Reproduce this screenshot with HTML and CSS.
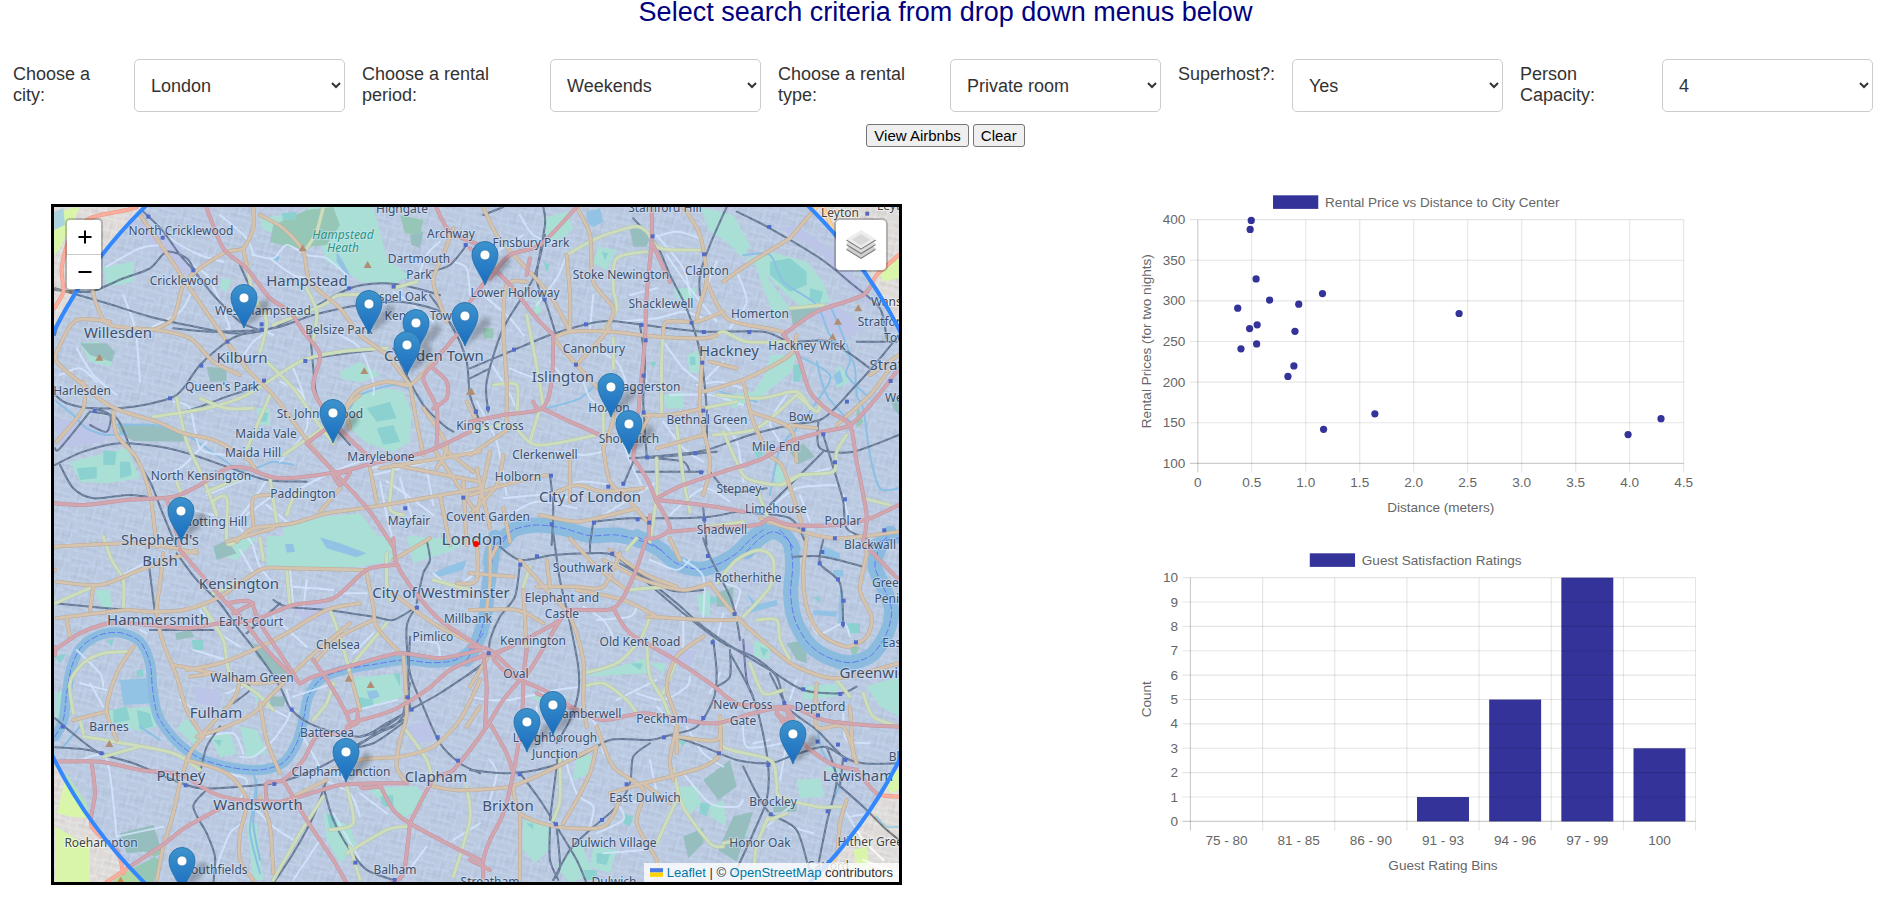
FILE: index.html
```html
<!DOCTYPE html>
<html lang="en">
<head>
<meta charset="utf-8">
<title>Airbnb search</title>
<link rel="stylesheet" href="styles.css">
</head>
<body>
<h2 class="page-title">Select search criteria from drop down menus below</h2>
<form class="search">
  <div class="fields">
    <div class="field"><label for="city">Choose a city:</label><select id="city"><option>London</option></select></div>
    <div class="field"><label for="period">Choose a rental period:</label><select id="period"><option>Weekends</option></select></div>
    <div class="field"><label for="type">Choose a rental type:</label><select id="type"><option>Private room</option></select></div>
    <div class="field"><label for="superhost">Superhost?:</label><select id="superhost"><option>Yes</option></select></div>
    <div class="field"><label for="capacity">Person Capacity:</label><select id="capacity"><option>4</option></select></div>
  </div>
  <div class="actions">
    <button type="button">View Airbnbs</button>
    <button type="button">Clear</button>
  </div>
</form>
<main class="results">
  <section class="map" aria-label="Map of London">
    <svg class="map-canvas" id="map" viewBox="0 0 845 675" preserveAspectRatio="xMidYMid slice"></svg>
    <div class="zoom">
      <button type="button" aria-label="Zoom in"><svg viewBox="0 0 16 16"><path d="M8 1.500v13M1.500 8h13"/></svg></button>
      <button type="button" aria-label="Zoom out"><svg viewBox="0 0 16 16"><path d="M1.500 8h13"/></svg></button>
    </div>
    <button type="button" class="layers" aria-label="Layers">
      <svg viewBox="0 0 26 26">
        <path fill="#747474" d="M.032 17.056l13-8 13 8-13 8z"/>
        <path fill="#d0d0d0" d="M.032 16.056l13-8 13 8-13 8z"/>
        <path fill="#747474" d="M.032 13l13-8 13 8-13 8z"/>
        <path fill="#dadada" d="M.032 12l13-8 13 8-13 8z"/>
        <path fill="#747474" d="M.032 9l13-8 13 8-13 8z"/>
        <path fill="#ededed" d="M.032 8l13-8 13 8-13 8z"/>
        <path fill="#d8d8d8" d="M5 8.500l8-5 8 5-8 5z"/>
      </svg>
    </button>
    <div class="attribution">
      <svg viewBox="0 0 12 8"><path fill="#4c7be1" d="M0 0h12v4H0z"/><path fill="#ffd500" d="M0 4h12v4H0z"/></svg>
      <a href="#leaflet">Leaflet</a> | © <a href="#osm">OpenStreetMap</a> contributors
    </div>
  </section>
  <section class="charts">
    <svg class="chart" id="scatter" viewBox="0 0 496 298" role="img" aria-label="Rental Price vs Distance to City Center"></svg>
    <svg class="chart" id="bars" viewBox="0 0 496 298" role="img" aria-label="Guest Satisfaction Ratings"></svg>
  </section>
</main>
<script src="app.js"></script>
</body>
</html>
```
FILE: styles.css
```css
* { box-sizing: border-box; }
html { overflow: hidden; }
body {
  margin: 0;
  background: #fff;
  color: #333;
  font-family: Arial, "Liberation Sans", sans-serif;
  font-size: 18px;
  line-height: 21px;
}
.page-title {
  margin: 0;
  padding-bottom: 34px;
  color: navy;
  font-size: 27px;
  font-weight: 400;
  line-height: 25px;
  text-align: center;
}
.fields {
  display: grid;
  grid-template-columns: 332fr 399fr 383fr 325fr 353fr;
  gap: 17px;
  padding: 0 18px 0 13px;
}
.field { display: flex; align-items: flex-start; }
.field label { flex: 1; padding: 5px 12px 0 0; }
.field select {
  width: 211px;
  height: 53px;
  padding: 12px;
  border: 1px solid #ccc;
  border-radius: 5px;
  background: #fff;
  color: #333;
  font: inherit;
}
.actions {
  display: flex;
  justify-content: center;
  gap: 4px;
  padding-top: 12px;
}
.actions button {
  height: 23px;
  padding: 0 7px;
  border: 1px solid #767676;
  border-radius: 3px;
  background: #efefef;
  color: #000;
  font-family: inherit;
  font-size: 15px;
  line-height: 18px;
}
.results {
  display: flex;
  align-items: flex-start;
  padding: 37px 0 0 51px;
}
.map {
  position: relative;
  flex: none;
  width: 45vw;
  margin-top: 20px;
  border: 3px solid #000;
  overflow: hidden;
  background: #e0dfdf;
}
.map-canvas { display: block; width: 100%; }
.zoom {
  position: absolute;
  top: 11px;
  left: 11px;
  border: 2px solid rgba(0, 0, 0, 0.2);
  border-radius: 5px;
  background-clip: padding-box;
}
.zoom button {
  display: flex;
  align-items: center;
  justify-content: center;
  width: 34px;
  height: 34px;
  padding: 0;
  border: 0;
  background: #fff;
  border-radius: 0 0 3px 3px;
}
.zoom button:first-child {
  height: 35px;
  border-bottom: 1px solid #ccc;
  border-radius: 3px 3px 0 0;
}
.zoom svg { width: 16px; height: 16px; margin-left: 2px; stroke: #000; stroke-width: 2; fill: none; }
.layers {
  position: absolute;
  top: 11px;
  right: 11px;
  display: flex;
  align-items: center;
  justify-content: center;
  width: 54px;
  height: 54px;
  padding: 0;
  border: 2px solid rgba(0, 0, 0, 0.2);
  border-radius: 6px;
  background: #fff;
  background-clip: padding-box;
}
.layers svg { width: 30px; height: 30px; }
.attribution {
  position: absolute;
  right: 0;
  bottom: 0;
  padding: 0 6px;
  background: rgba(255, 255, 255, 0.8);
  color: #333;
  font-size: 13px;
  line-height: 19px;
  white-space: nowrap;
}
.attribution svg { width: 13px; height: 9px; }
.attribution a { color: #0078a8; text-decoration: none; }
.charts {
  flex: 1;
  display: flex;
  flex-direction: column;
  align-items: center;
  gap: 21px;
  margin-left: 38px;
}
.chart {
  width: 59%;
  fill: #666;
  font-family: Arial, "Liberation Sans", sans-serif;
  font-size: 12px;
}
.chart line { stroke: rgba(0, 0, 0, 0.1); }
.chart .axis { stroke: rgba(0, 0, 0, 0.2); }
.chart .mark { fill: rgba(0, 0, 128, 0.8); }
.end { text-anchor: end; }
.middle { text-anchor: middle; }

.area-park { fill: #c8f6cc; }
.area-wood { fill: #b0d8a4; }
.area-pitch { fill: #a2e4c4; }
.area-grass { fill: #d8f5aa; }
.area-water { fill: #aad3df; }
.area-works { fill: #dfd4e2; }
.area-slate { fill: #b0ccb0; }
.line { fill: none; stroke-linejoin: round; stroke-linecap: round; }
.river { stroke: #a2cad8; }
.ferry { stroke: #6a73ee; stroke-width: 1; stroke-dasharray: 6 3; }
.canal { stroke: #a2cfdf; stroke-width: 2; }
.minor { stroke: #fff; stroke-width: 2; opacity: 0.8; }
.rail { stroke: #6e7075; stroke-width: 2; }
.rail-gap { stroke: #a8a9ad; stroke-width: 1; stroke-dasharray: 5 4; opacity: 0.6; }
.secondary { stroke: #f6f3ac; stroke-width: 3; }
.secondary-case { stroke: #d3d59a; stroke-width: 4; }
.primary { stroke: #fcd29c; stroke-width: 3; }
.primary-case { stroke: #e0b176; stroke-width: 4; }
.trunk { stroke: #fbae9c; stroke-width: 3; }
.trunk-case { stroke: #ea9486; stroke-width: 4; }
.station { fill: #5a66bb; }
.peak { fill: #d08f50; }
.place {
  font-family: "Noto Sans", sans-serif;
  fill: #444;
  stroke: rgba(255, 255, 255, 0.5);
  stroke-width: 2;
  paint-order: stroke;
  font-size: 12px;
}
.town { font-size: 15px; }
.capital { font-size: 17px; }
.nature { fill: #2a9a5a; font-style: italic; font-size: 12px; }
.range { fill: #38f; fill-opacity: 0.2; stroke: #38f; stroke-width: 4; }
.center { fill: #f00; }
```
FILE: app.js
```js
const NS = 'http://www.w3.org/2000/svg';

function add(parent, tag, attrs, text) {
  const el = document.createElementNS(NS, tag);
  for (const key in attrs) el.setAttribute(key, attrs[key]);
  if (text !== undefined) el.textContent = text;
  parent.appendChild(el);
  return el;
}

/* ---- charts ---- */
const TOP = 31.5, BOTTOM = 247;

function frame(svg, o) {
  const { left, right, rows, cols, title, titleX, xTitle, yTitle } = o;
  add(svg, 'rect', { class: 'mark', x: titleX, y: 10, width: 40, height: 12 });
  add(svg, 'text', { x: titleX + 46, y: 20 }, title);
  rows.forEach((label, i) => {
    const y = BOTTOM - (BOTTOM - TOP) * i / (rows.length - 1);
    add(svg, 'line', { x1: left - 7, x2: right, y1: y, y2: y, class: i ? '' : 'axis' });
    add(svg, 'text', { class: 'end', x: left - 11, y: y + 4 }, label);
  });
  for (let i = 0; i <= cols; i++) {
    const x = left + (right - left) * i / cols;
    add(svg, 'line', { x1: x, x2: x, y1: TOP, y2: BOTTOM + 8, class: i ? '' : 'axis' });
  }
  add(svg, 'text', { class: 'middle', x: (left + right) / 2, y: 290 }, xTitle);
  add(svg, 'text', { class: 'middle', transform: 'translate(14 139) rotate(-90)' }, yTitle);
}

const scatter = document.getElementById('scatter');
frame(scatter, {
  left: 55.5, right: 485, rows: [100, 150, 200, 250, 300, 350, 400], cols: 9,
  title: 'Rental Price vs Distance to City Center', titleX: 122,
  xTitle: 'Distance (meters)', yTitle: 'Rental Prices (for two nights)'
});
['0', '0.5', '1.0', '1.5', '2.0', '2.5', '3.0', '3.5', '4.0', '4.5'].forEach((t, i) =>
  add(scatter, 'text', { class: 'middle', x: 55.5 + 429.5 * i / 9, y: 268 }, t));
[[.495, 399], [.485, 388], [.54, 327], [.665, 301], [.37, 291], [.935, 296], [1.155, 309], [.55, 270.5],
 [.48, 266], [.9, 262.5], [.545, 247], [.4, 241], [.89, 220], [.835, 207], [2.42, 284.5], [1.64, 161],
 [1.165, 142], [3.985, 135.5], [4.29, 155]].forEach(([d, p]) =>
  add(scatter, 'circle', { class: 'mark', r: 3.2, cx: 55.5 + 429.5 * d / 4.5, cy: BOTTOM - (BOTTOM - TOP) * (p - 100) / 300 }));

const bars = document.getElementById('bars');
const step = (495.5 - 49) / 7;
[0, 0, 0, 1, 5, 10, 3].forEach((n, i) => {
  if (!n) return;
  const h = (BOTTOM - TOP) * n / 10;
  add(bars, 'rect', { class: 'mark', x: 49 + step * (i + .14), width: step * .72, y: BOTTOM - h, height: h });
});
frame(bars, {
  left: 49, right: 495.5, rows: [0, 1, 2, 3, 4, 5, 6, 7, 8, 9, 10], cols: 7,
  title: 'Guest Satisfaction Ratings', titleX: 154.5,
  xTitle: 'Guest Rating Bins', yTitle: 'Count'
});
['75 - 80', '81 - 85', '86 - 90', '91 - 93', '94 - 96', '97 - 99', '100'].forEach((t, i) =>
  add(bars, 'text', { class: 'middle', x: 49 + step * (i + .5), y: 268 }, t));

/* ---- map: four tiles, each with an origin, drawn at a third of its own units ---- */
const tiles = [
  { ox: -14, oy: -12,
    works: ['40 670 230 690 190 740 60 760', '250 60 420 150 460 230 440 240 300 120'],
    grass: ['42 60 90 40 120 36 60 160 42 180'],
    park: ['800 36 1000 36 1020 110 1040 190 1110 245 1060 265 960 260 920 230 860 200 830 110',
      '925 640 960 600 1040 580 1090 590 1115 650 1110 740 1060 770 980 745 930 700',
      '90 800 260 760 300 850 200 865 120 860', '730 1056 730 1000 850 965 960 955 1040 1056',
      '900 530 960 500 1020 540 960 562 905 552', '190 215 280 200 282 260 200 275', '120 445 170 440 225 470 212 515 150 500',
      '660 70 730 60 720 120 670 105', '545 250 575 255 560 290 540 280', '650 640 690 640 690 690 655 690'],
    wood: ['700 90 800 45 880 36 900 90 860 150 760 160 690 140', '1080 60 1150 75 1140 120 1095 115'],
    slate: ['230 685 400 695 445 720 430 740 280 738 240 715', '500 515 560 520 560 560 510 560', '120 445 200 445 225 470 215 500 150 480', '1110 120 1150 110 1140 160 1115 150'],
    pitch: ['190 765 230 770 225 810 190 810', '110 820 170 815 170 850 120 855', '980 640 1050 620 1070 670 1010 680', '1010 700 1060 690 1080 740 1030 750', '660 650 685 655 680 680 660 680', '240 800 270 800 275 840 240 850', '725 55 770 50 765 75 730 75'],
    water: ['42 50 70 40 75 90 42 105', '890 170 910 200 930 240 915 235 890 200', '700 180 720 185 712 200 700 195'],
    canal: ['50 620 100 660 140 700 200 720 260 715', '930 640 960 600 1060 570 1120 590 1150 620', '600 830 660 815 700 800 760 810', '230 690 340 690 430 715 500 760 600 830'],
    minor: ['200 215 300 160 370 150', '540 60 620 130 640 180', '640 180 700 190 740 150 800 180 860 190 920 240', '230 600 160 540 110 460', '250 300 280 380 290 430 300 560', '400 620 450 640 480 760 560 780', '330 860 420 820 500 740', '440 200 500 240 540 320 570 400', '700 400 640 440 600 500', '760 520 790 600 800 700 720 800', '900 420 960 460 1000 560 1000 600', '820 250 760 240 690 190', '560 400 600 420 640 400 700 420', '330 400 420 350 450 300', '720 560 780 590 800 640', '590 980 650 900 690 840', '780 880 860 840 960 800 1080 790', '1040 860 1100 900 1180 960', '1020 860 1040 960 1060 1040', '1080 850 1120 980', '1160 820 1180 930', '990 820 1260 780', '1180 380 1120 330 1060 290', '1200 140 1160 180 1130 260', '500 900 620 850', '640 1050 600 1000 560 960', '620 960 700 900', '1240 200 1280 220 1290 300', '680 930 740 980', '310 50 390 130 480 180 550 200', '60 540 120 520 170 560', '1000 840 1210 790 1320 760', '440 940 520 960'],
    rail: ['310 50 370 110 420 180 460 225 520 300 600 380 660 405', '45 285 150 290 250 250 330 220 380 170 440 190 465 230', '45 280 200 325 330 365 440 390 580 415 680 405 780 360 930 280 1030 265 1110 275 1200 300', '100 300 60 370 45 420', '400 400 520 410 700 400 820 360 960 330 1080 320 1200 350 1250 420', '660 405 600 420 560 440 480 510 430 580 390 610 280 635 160 640 80 625 45 600', '340 665 450 645 560 605 660 570 760 510 820 490 960 470 1040 462', '45 810 130 770 240 745 360 755 460 780 560 815 680 855 800 860', '150 650 60 760 45 760', '150 650 230 670 280 780 330 860 370 960 410 1056', '60 810 100 880 160 910 260 900 320 905', '810 410 820 520 830 600 880 690 930 750', '1060 460 1110 560 1150 630 1210 690 1240 710', '1170 300 1240 400 1280 500 1290 600 1320 680', '1280 150 1230 210 1170 230', '600 210 640 300', '160 640 210 660 200 710 150 690'],
    secondary: ['850 36 830 110 800 160', '620 200 640 300 680 380 660 470', '340 665 500 640 620 600 780 500 900 470 1040 460', '410 610 440 740 490 850 530 960', '680 500 760 580 830 680 880 745', '690 600 630 740 620 760', '730 780 850 700', '500 890 600 850', '530 960 520 920 560 910 560 1040 590 1040', '690 850 710 980', '440 940 410 860', '1060 820 1050 940 1090 960', '800 280 830 350 820 440', '1060 280 1130 260', '740 960 760 910 790 890', '480 610 560 640 640 640', '1040 300 900 300 850 330 700 390'],
    primary: ['640 40 640 100 610 160 560 170 480 220 430 270 400 370 340 405', '610 160 620 210', '150 250 170 330 210 390 350 405 450 430 520 500 600 540', '210 380 110 375 60 450 50 500 130 570 190 620 250 650 350 680 430 715 520 735 620 790 650 830', '660 60 730 100 790 170 810 260 900 340 960 420 1040 480 1110 570', '1240 100 1210 180 1180 260 1220 380', '300 60 370 160 450 280 540 410 620 520 700 600 760 680 820 760 890 840', '1110 570 1130 680 1150 780', '960 600 920 640 930 700', '910 650 950 590 1040 560 1110 570 1180 500', '1110 570 1040 560', '590 1040 640 1000 760 985 860 955 1000 935 1150 910 1320 880', '130 560 130 640 50 740', '220 650 230 720 290 790 330 900 350 1056', '990 820 1010 920', '1180 760 1260 880 1300 940', '1210 760 1300 830', '1020 820 1320 770', '840 950 900 880', '640 990 640 910 700 900', '560 1040 700 1000', '1280 620 1320 700', '1150 640 1220 750 1190 820', '1060 810 1320 860', '1200 900 1230 1050', '1270 860 1280 1050'],
    trunk: ['500 40 550 160 620 220 690 310 750 350 790 410 840 480 820 580 880 680 990 790', '45 925 140 930 260 915 400 905 480 870 560 820 620 820 720 850 900 830 1000 805 1160 770 1290 710', '800 745 860 700', '800 745 900 850 990 950 1060 1056', '1190 40 1230 110 1320 150', '1190 500 1150 550 1190 640 1190 750', '1250 420 1190 490', '380 910 420 1050', '880 840 930 830 900 870 880 840', '1180 520 1220 560 1220 610 1180 640', '42 340 70 290 65 220 90 130 150 70 260 45 290 36'],
    stations: '325 65 368 128 460 226 562 440 484 512 390 610 164 648 665 388 665 404 796 498 672 557 927 280 1061 275 1277 150 1308 650 1270 908 1096 940',
    peaks: '788 160 983 210 178 488 973 528 1294 590' },
  { ox: 416, oy: -12,
    works: ['930 100 1060 180 1130 270 1200 330 1190 300 1100 180 980 90', '1000 340 1100 330 1180 400 1120 440'],
    grass: ['1287 180 1230 240 1240 260 1287 250'],
    park: ['220 70 290 50 310 100 280 130 220 140', '385 155 440 165 410 225 370 205', '690 36 790 60 840 150 820 190 770 140 720 110',
      '830 190 900 170 1010 200 1060 260 1080 320 1000 340 950 300 890 240', '650 480 685 465 690 530 660 535',
      '900 480 980 480 965 530 880 600 790 640 750 600 850 590 890 530', '850 190 960 340 920 380 880 280', '610 280 680 280 670 320 620 310', '1090 540 1110 510 1140 560 1100 580', '580 600 640 590 640 640 590 640', '910 810 930 810 950 870 920 880', '200 300 215 350 190 360'],
    wood: ['1160 620 1180 680 1160 700', '40 400 70 400 70 430 40 430'],
    slate: ['480 105 510 90 540 125 530 155 490 155', '960 770 1000 745 1035 785 985 808', '960 340 1060 340 970 400', '1260 610 1287 600 1287 660 1270 640'],
    pitch: ['900 200 960 190 1010 230 1010 270 960 290 900 240', '1020 280 1060 290 1050 325 1020 315', '660 485 675 485 678 510 660 510', '970 510 1000 505 990 560 970 560', '220 200 240 210 230 230', '540 500 560 500 550 520', '1130 180 1160 190 1150 210', '395 170 415 175 405 195', '850 760 870 750 880 780 860 790'],
    water: ['350 50 390 40 400 80 370 95 350 80', '1090 540 1110 525 1120 560 1100 570'],
    river: [['100 1040 130 1005 200 990 280 1000 360 1022 440 1020 520 1040 580 1068', 15], ['830 1070 870 1030 910 1010 950 1030 970 1060', 15], ['60 1100 70 1060 110 1020', 15], ['1200 1056 1230 1040 1287 1030', 10]],
    canal: ['820 180 900 180 940 260 1040 330 1080 420 1150 500 1160 600 1180 640 1200 780 1230 880 1287 880', '980 480 1080 540 1040 620 980 700 930 760 900 900', '230 640 330 610 390 560 450 560', '1040 500 1070 600 1140 680', '750 590 860 620', '1080 330 1140 480 1130 540 1200 610'],
    minor: ['540 130 620 110 690 130', '590 180 660 280 740 380', '370 300 360 400', '440 380 560 370 640 350 700 370', '580 440 640 520 690 560', '120 520 200 550 330 560', '560 120 640 220 660 300', '800 230 830 320 780 400', '530 560 520 480', '600 600 720 600 820 630', '740 660 800 740 820 860', '40 300 120 370 160 420', '60 500 110 580 140 640', '240 900 330 860 420 870', '260 770 340 780 400 770', '400 960 500 900 560 860', '240 500 290 560', '340 450 440 500 480 600', '760 500 700 560', '950 600 900 680 930 740', '20 620 80 740 110 900', '580 680 640 760 700 800', '900 940 980 880 1100 870', '600 960 700 880 780 920', '990 900 1020 980', '740 200 700 300', '1120 900 1150 1040', '460 740 480 800 520 880', '480 300 560 280', '120 960 200 920 320 940', '100 910 210 900 330 910', '680 570 750 560 820 580', '150 60 190 120 270 150', '80 170 160 120', '1000 840 1080 820', '290 180 260 250 200 330', '560 340 620 330', '340 560 360 610 400 640'],
    rail: ['490 70 560 150 600 240 650 340 690 470 710 640 710 760', '0 520 120 470 240 420 340 390 420 378 560 395 700 410 880 410 960 440 1080 440 1200 520', '220 36 225 90 200 250 230 330 255 410', '225 120 190 250 100 400 50 560 55 650', '770 36 720 150 690 240 690 300', '800 50 900 100 1050 190 1150 270 1230 340 1250 430', '510 390 525 500 520 620 530 780', '480 790 600 780 710 765 840 720 960 690 1060 670 1150 580 1230 490 1287 420', '1045 680 1050 760 1150 770 1287 720', '1060 770 960 870 900 930', '500 830 640 830 700 830', '370 980 480 970 600 970 720 965 800 950', '490 800 460 870', '240 840 250 940 245 1050', '370 980 360 1050', '700 940 710 1050', '560 790 640 800 660 830', '1060 720 1100 850 1120 920 1130 1000 1190 1030', '40 60 100 36', '0 550 60 520', '530 790 740 770', '1160 440 1280 440', '720 830 780 890 890 880', '800 950 960 970 1010 1050'],
    secondary: ['290 180 380 130 490 95 530 110 570 160 690 165', '530 170 440 190 430 280 440 340 400 410', '580 400 575 500 575 660', '430 430 430 520', '170 360 190 460 210 570 220 640', '740 600 870 610 980 590 1020 640', '760 710 800 800 830 850 930 870 990 840', '620 690 640 850 660 950', '560 790 560 900 540 1040', '980 600 1040 650 1050 620', '0 710 120 690 200 750 380 720', '730 430 760 410 830 440 960 440', '960 340 1060 330', '1180 910 1260 930', '730 720 860 700 980 600', '700 640 800 620', '400 640 400 760', '70 570 140 570 140 660', '930 870 990 840 1090 830 1100 770 1130 720', '860 880 890 960', '680 1000 820 980', '210 640 180 740'],
    primary: ['40 36 80 120 150 200 240 300 300 410', '320 36 360 120 370 260 430 340 410 400', '640 36 690 120 710 250 690 330 680 370', '710 260 770 370 890 400 940 410', '250 430 300 410 420 410 560 425 700 430 740 420', '700 460 690 640 720 800 700 900', '170 260 110 270 100 400 110 560 110 680', '290 180 300 300 300 410', '250 430 320 510 410 610 430 670 400 760', '320 510 420 400', '820 560 850 680 900 780 940 820 1000 1000', '700 590 830 550 960 480 980 420', '580 420 590 380 680 380 760 350', '1200 540 1287 480', '960 130 830 210 760 260', '1040 36 960 130', '520 660 600 660 700 640', '560 760 700 720', '0 900 140 860 230 840', '0 960 80 870 100 780', '20 820 60 1000', '60 770 20 960', '240 900 320 870 400 890 520 880', '300 780 300 920', '210 960 320 980 420 960 500 940', '0 780 120 700', '1100 690 1200 600 1260 520', '980 800 960 700 840 650', '100 940 120 1040', '870 970 960 1000 1100 1030 1287 1010', '1060 36 1100 130', '400 760 420 860 480 920 540 990', '720 500 800 520', '960 690 1040 700', '540 660 500 740'],
    trunk: ['545 36 545 140 530 300 525 430 510 600 500 700', '545 140 600 260', '0 160 60 210 120 270 200 370 250 420', '60 250 120 180 210 150 320 36', '250 420 245 560 215 640 100 660 0 680', '215 640 300 680 390 720', '200 640 190 620', '490 790 530 850 560 920', '560 910 640 870 760 830 880 790 960 740 1060 710 1140 690 1210 620 1287 520', '940 420 980 470 1020 590 1080 650 1140 690 1160 800 1190 960 1180 1040', '560 915 700 930 820 950', '560 920 600 1000 540 1030 540 960', '600 1010 720 1000 860 990 900 970 960 990 1100 990 1200 970 1287 930', '0 320 60 240', '940 420 1040 350 1180 300 1220 240 1287 180', '500 700 490 790', '180 190 170 240'],
    stations: '548 124 702 178 898 96 665 383 514 390 527 436 348 388 702 411 838 411 132 464 318 509 697 503 521 542 521 653 700 647 531 787 676 775 693 832 415 875 460 866 243 842 503 973 538 983 245 988 372 983 703 973 1060 718 1095 802 1125 913 1243 1006 1000 1004 1095 1030 1131 620 1262 558 1192 56 224 313 18 650 54 640',
    peaks: '1165 340 1104 380 1088 427 0 590' },
  { ox: -14, oy: 333,
    works: ['760 200 860 190 870 240 790 240', '1100 560 1170 540 1180 600 1110 620', '460 440 540 450 540 500 470 490'],
    grass: ['45 860 150 920 150 1030 45 1030', '50 820 80 700 140 790 150 835 90 830'],
    park: ['680 -12 1050 -12 1070 60 960 80 780 88 680 80', '930 415 1080 400 1088 470 955 510', '210 510 330 500 350 560 300 575 210 545',
      '410 565 440 535 490 600 460 612', '510 590 570 580 590 640 540 652', '980 745 1130 738 1160 780 1090 838 1020 780', '850 820 930 860 950 920 900 970 860 900',
      '1100 -12 1290 0 1240 30 1120 70', '520 40 560 -5 650 -5 590 60', '45 460 80 450 80 520 45 540', '600 560 650 570 680 640 620 650', '160 150 210 150 215 200 190 210', '620 850 650 850 670 1020 640 1020', '640 460 660 450 650 490'],
    wood: ['230 890 340 860 365 940 250 1000 210 1030 340 1030 360 960'],
    slate: ['640 310 680 320 745 400 705 405 650 350', '405 280 450 270 465 290 410 300', '520 20 560 0 590 40 530 60', '240 880 340 855 365 930 260 940', '690 470 740 470 730 500 690 500'],
    pitch: ['220 510 260 500 270 540 220 550', '290 510 330 520 340 560 300 570', '455 300 490 300 490 330 460 330', '950 470 1000 480 1000 500 960 505', '520 600 545 600 540 620', '200 300 220 300 215 320', '1060 400 1080 400 1080 440', '1020 770 1060 765 1060 800 1030 800', '860 820 890 830 890 870 870 870', '290 390 310 390 310 410 290 410', '45 350 80 340 60 370'],
    water: ['240 420 320 415 335 490 250 495', '1180 100 1220 80 1280 60 1270 90 1200 110', '840 -8 900 10 980 40 950 52 860 25', '735 12 760 12 765 35 740 38', '980 455 1010 450 1020 470 990 480'],
    river: [['45 590 70 540 80 460 95 380 125 320 180 285 240 278 300 305 330 370 338 450 355 530 410 605 480 655 570 682 660 690 730 668 770 610 790 540 805 470 845 415 920 388 1010 372 1090 360 1170 368 1240 362 1290 330 1330 280', 10], ['640 690 650 760 640 850 660 960', 2], ['70 620 120 560', 2]],
    canal: ['650 720 640 800 630 880 660 1000', '360 600 300 560'],
    minor: ['120 430 200 450', '150 430 190 500', '110 330 180 400 190 440', '480 210 540 280 600 320', '640 20 660 80 700 130', '750 90 760 200', '800 120 790 210', '560 460 630 430', '740 450 750 520 700 600 640 650 600 650', '610 640 580 580 500 590', '680 500 740 530', '1180 100 1240 140 1320 90', '120 660 200 660 230 890', '230 890 370 860', '850 720 930 760 960 830', '960 760 1040 820', '640 800 700 860 760 900', '530 980 570 880 610 850', '890 160 980 160', '1120 300 1190 310 1200 350', '700 230 800 320', '760 140 880 150', '940 340 1000 280', '760 470 880 430', '1240 900 1320 850', '760 1020 800 960 840 900', '420 480 480 520', '320 280 300 270', '1160 920 1100 1000', '600 30 640 100', '460 330 560 360', '560 700 620 720 600 780', '790 590 850 700', '950 510 1070 480', '240 110 330 60', '880 820 960 960'],
    rail: ['410 40 470 120 540 190 590 260 660 350 720 440 755 510 830 560 960 590 1040 550 1110 510 1200 460 1320 380', '45 190 200 205 330 215', '325 60 335 140 345 220', '45 535 110 590 180 640 280 670 400 720 480 745 600 740 700 730 800 700 900 650 980 600 1080 530', '45 622 130 628 190 640', '500 750 460 800 500 880 525 950 520 1030', '480 700 500 620 540 560', '1110 290 1105 420 1110 510', '1130 200 1100 260 1110 400 1150 500 1200 610 1260 670 1320 700', '860 720 820 830 760 940 700 1030', '850 740 880 840 930 930 980 990 1060 1020', '960 590 1060 560 1110 500', '620 280 720 190', '580 490 630 450 620 430', '700 180 740 200 860 210 1000 230 1060 240 1130 200', '940 620 1090 540', '1090 520 1110 430', '330 270 520 270', '1130 190 1150 100 1170 60 1160 0', '900 630 1000 610 1100 540'],
    secondary: ['45 190 160 140', '190 -10 215 60 250 120 250 200', '100 520 90 430 130 370 190 340 270 335', '130 590 250 610 400 640 480 690', '490 200 550 300 570 400 650 460 700 510', '870 210 900 290 930 400', '820 540 860 490 880 430', '660 -5 670 60', '740 90 750 200', '920 740 940 850 870 870', '1090 560 1160 660 1180 740', '940 370 1040 250', '920 940 1040 870 1100 860', '700 1020 780 880 850 770', '1280 740 1290 840 1240 1010', '1180 120 1290 150', '1040 40 1040 130 1050 180', '190 650 300 620', '120 540 130 580', '930 920 960 1020', '520 160 590 130'],
    primary: ['50 235 170 220 260 210 330 215 430 210 540 170 660 90 740 85 980 90', '50 125 180 135 300 90 400 55 470 30', '370 40 360 130 350 220 370 310 410 410 440 510 490 590', '45 90 -5 90', '490 590 450 640 420 730 400 820 370 920 350 1020', '440 390 540 370 640 330 740 280 860 210 960 190', '470 590 560 560 640 520 700 460 800 360 930 250', '280 320 230 400 200 510 230 600', '660 490 680 600 720 700', '400 375 520 400 640 430 740 420', '980 100 1000 200 1010 260 1080 340', '830 360 900 290 1000 240', '1090 340 1100 520 1080 600 1070 680 1100 730', '850 700 960 660 1080 650 1180 620 1260 540 1320 420', '440 660 560 700 620 780 600 880 600 960 640 1020', '660 770 690 860 700 1000', '1060 160 1180 250 1320 320', '160 140 150 210', '80 240 90 290', '740 780 860 720', '480 590 580 480 600 420', '1060 60 1170 -5', '450 410 520 400', '45 20 260 10 380 20 470 40', '1180 740 1240 750 1320 750', '1280 560 1320 500', '1310 -5 1310 120 1250 130', '930 400 960 510', '100 540 200 515'],
    trunk: ['45 330 120 280 210 250 330 255 440 265 540 250 640 240 760 195 880 175 980 90 1070 75', '420 30 480 100 560 190 600 230 680 330 780 430', '560 190 630 185 660 250 760 400 780 430 820 410 960 370 1080 340 1200 355 1320 330', '1060 -5 1070 70 1120 150 1200 240 1320 320', '820 360 880 450 930 550 900 580 830 590 790 660 730 720 680 730 680 780', '930 550 1060 510 1160 450 1230 390 1320 350', '45 665 180 665 300 690 420 705 520 760 600 780 720 785 780 770 900 735 1020 730 1100 730', '550 800 440 860 360 920 200 1026', '155 670 165 760 155 860 230 930 250 1000', '730 720 800 840 880 960 920 1030', '1020 735 1060 810 1110 850 1220 910 1320 960', '1110 850 1090 1000 1050 1030', '1320 590 1240 690 1180 720 1110 850', '920 520 950 510 950 550 920 560', '580 220 640 190', '45 345 45 320', '960 735 970 745 1020 740'],
    stations: '69 560 184 640 437 736 703 732 755 509 1131 203 1102 472 1115 509 1193 592 1254 662 946 968 1064 1020',
    peaks: '926 416 992 435 208 612 242 1022' },
  { ox: 416, oy: 333,
    works: ['560 330 680 330 660 380 580 370', '800 290 850 320 840 460 820 440'],
    grass: ['1287 690 1240 710 1260 760 1287 750', '1150 930 1190 920 1200 990 1160 980'],
    park: ['340 410 440 380 530 355 530 400 430 405', '160 840 240 850 235 930 195 970 160 930', '620 740 680 740 695 790 650 830',
      '1190 440 1287 410 1287 530 1230 500', '980 720 1050 715 1065 770 990 775', '370 920 440 930 420 1000 360 980', '320 640 370 650 360 700 310 720', '680 170 720 150 720 230 690 220', '720 800 760 780 770 860 720 830', '850 300 900 320 900 360 850 350', '180 470 240 470 230 500', '1000 440 1110 430 1100 470 1000 480', '1060 690 1100 670 1110 700', '260 980 330 900 370 1000 300 1030', '800 850 840 850 830 890 800 880', '540 370 590 370 580 400'],
    wood: ['1140 320 1170 320 1150 360'],
    slate: ['700 720 780 660 800 740 745 780', '640 890 700 865 700 910 655 955', '790 830 850 815 800 965 745 930', '910 800 980 790 980 815 910 818', '950 310 1010 300 1010 370 980 360', '740 160 790 140 790 200 740 200'],
    pitch: ['720 170 740 170 740 190 720 190', '380 940 420 940 410 975 380 970', '460 820 490 830 480 860 460 850', '1130 250 1170 250 1170 280 1140 280', '870 320 895 330 880 350', '690 790 720 790 710 830 690 820', '170 850 190 850 190 870', '1030 170 1050 170 1050 190', '480 370 520 370 510 390', '340 990 380 990 380 1020 350 1020', '610 590 650 600 640 620'],
    water: ['830 200 920 180 925 195 835 220', '1030 210 1100 215 1100 230 1030 225', '1060 20 1110 40 1110 60 1060 50', '1110 150 1120 150 1120 250 1105 250', '1090 90 1120 90 1120 110 1090 110', '830 160 860 190 850 200'],
    river: [['-10 360 20 310 45 230 55 140 68 50 75 -10', 14], ['500 -10 560 20 620 70 690 88 750 70 800 40 840 0 880 -30', 15], ['930 -30 960 10 968 80 962 160 975 240 1015 310 1070 350 1140 368 1205 345 1250 280 1265 210 1240 140 1215 80 1230 20 1260 -20', 15]],
    canal: ['1040 560 1060 640 1110 720 1080 800', '1220 830 1250 860 1287 860'],
    minor: ['340 200 400 240 430 290', '380 240 480 230 500 200', '540 60 620 90 660 60', '640 60 700 110 700 230', '760 130 810 150 790 220', '120 480 260 450 330 440', '500 460 580 480 650 440 660 410', '820 530 830 620 940 610', '950 610 930 720', '640 700 720 790 800 800 820 780', '560 500 620 560', '350 520 380 560 400 640', '280 640 320 760 370 800 360 860', '240 560 290 520', '380 880 460 840 450 800', '720 460 750 400', '850 610 900 600', '440 480 560 420', '420 770 520 790', '1000 160 1040 280 1120 250 1140 290', '1130 820 1180 900 1240 960', '960 860 1030 880', '1120 520 1130 600 1200 610', '0 470 60 480 120 480', '640 210 640 330', '760 220 740 300', '540 660 560 760', '1180 960 1287 1000', '1140 830 1200 820', '980 420 960 480', '200 500 210 600', '890 860 960 800', '400 940 520 930', '60 660 80 700 60 780', '650 560 700 640 760 680'],
    rail: ['90 20 150 60 250 45 360 40 430 45 520 110 620 190 700 260 800 330 900 390 1000 450 1110 460 1160 440', '250 -20 270 120 300 250 325 380 325 460 300 540 260 610', '150 70 135 170 90 230 60 300 55 350 20 400', '420 30 500 100 640 220 760 310 850 350 920 410 950 500 1040 570 1120 650 1180 670 1287 670', '0 690 100 700 200 690 330 650 420 600 540 600 600 585 680 560 730 480 740 400 730 300', '600 585 700 620 800 660 900 670 960 650 1060 620 1120 650', '150 700 210 780 260 860 320 960 350 1030', '540 610 490 650 480 730 440 800 360 870 300 930 250 1020', '780 340 840 450 870 540 895 680 890 780 850 880 790 1010', '820 300 830 420 850 470', '1070 620 1100 720 1070 850 1040 1000', '1100 730 1180 800 1240 860 1287 900', '820 680 860 760 900 820 980 870 1020 1000', '360 40 360 0', '265 640 250 760 240 840', '700 -5 720 50 780 170 800 240 810 300', '780 330 780 410 740 440', '900 400 940 480', '1060 0 1050 70 1110 130 1120 260', '1120 650 1110 740', '260 860 270 980 250 1020', '970 50 1060 50 1180 80', '450 70 600 150 700 150', '240 860 240 960 265 1020', '0 400 40 370'],
    secondary: ['340 400 440 370 510 300 540 230', '530 310 540 410 580 480 600 530', '340 440 400 430 470 480 500 520', '470 150 600 140', '740 130 800 60 870 30 910 60 900 140 820 230', '860 240 920 240 930 300 960 360', '840 370 880 460 940 450', '760 540 760 620 900 660 920 730 930 770 1040 800 1120 800', '610 690 640 800 720 910 760 920', '270 660 270 780 250 840', '620 780 560 910', '900 820 860 920 850 1020', '1180 460 1210 530 1287 560', '180 80 160 140', '580 460 620 360', '500 -5 470 30', '1100 420 1140 470', '950 820 900 840', '760 910 800 900'],
    primary: ['60 -5 60 120 50 210', '0 100 130 110', '150 60 230 150 300 230 340 360 340 480 350 560', '300 -5 380 80 470 150', '400 60 520 120 640 150 720 130', '420 30 520 100 620 140', '530 230 700 240 800 240', '720 130 800 230 900 320 980 380 1100 415 1287 370', '700 290 620 350 590 440 620 540 620 640', '620 590 740 600 750 530', '750 530 750 640 700 680 600 710 520 730 420 760', '380 560 430 680 520 750 500 850 560 960 560 1020', '0 750 120 740 220 700 300 660 380 620', '130 740 150 820 260 860 400 860 450 780', '150 830 150 1020', '520 730 600 790', '1010 -5 1000 100 1010 200 1050 280 1130 320 1190 290 1205 230 1170 150 1190 40 1180 -5', '320 140 200 140', '230 60 240 140', '160 150 170 330', '0 210 140 210 220 250', '1130 780 1110 850 1100 940 1060 1020', '380 620 360 700 320 780 280 850', '1040 430 1040 560 1120 560 1160 670', '320 150 460 180 560 230', '600 -5 630 60', '1140 500 1150 650', '80 20 60 60', '450 40 400 140 320 140', '60 340 0 440', '620 560 600 660 610 720'],
    trunk: ['530 -5 490 110 430 205 300 210 270 240 220 270 100 330 0 360', '430 205 480 280 600 350 720 430 800 490 900 500 950 510', '270 240 180 390 150 410 60 330 0 320', '150 420 240 460 320 510 400 540 520 520 640 540 740 550 850 520 960 500 1060 540 1180 555 1287 560', '150 420 100 480 50 560 0 630', '160 430 155 540 130 700 100 820 60 900 40 960 40 1026', '60 550 110 640 130 700', '40 340 50 440 45 560', '950 510 990 600 1080 670 1160 690', '920 520 950 560', '100 330 70 350 100 390 150 420', '1160 690 1220 760 1287 770', '0 960 60 990', '320 510 200 460', '950 500 970 540 930 530 920 510', '1190 20 1287 120', '170 330 160 410'],
    stations: '427 41 151 74 201 49 714 48 794 222 728 307 1119 252 1121 182 1104 118 1057 36 1049 70 1158 307 1000 448 1111 462 943 489 700 534 582 592 747 640 895 675 1043 605 1104 614 1126 660 1073 814 902 823 470 733 396 840 258 853 149 703 56 340 1044 526',
    peaks: '' }
];

const map = document.getElementById('map');
const defs = add(map, 'defs', {});
const hatch = add(defs, 'pattern', { id: 'streets', width: 34, height: 30, patternUnits: 'userSpaceOnUse', patternTransform: 'rotate(14)' });
add(hatch, 'path', { d: 'M0 5h18l4 4h12M0 13h9l3-3h22M0 21h22l3 2h9M0 28h34M5 0v13M11 5v23M17 10v18M23 0v9M28 9v21M31 0v9M2 21v9', fill: 'none', stroke: '#ebebeb', 'stroke-width': .8 });
add(hatch, 'path', { d: 'M1 8h16M13 16h15M3 24h20M8 14v12M20 12v8M26 2v14', fill: 'none', stroke: '#cbc9c8', 'stroke-width': .7 });
const pinFill = add(defs, 'linearGradient', { id: 'pin', x1: 0, y1: 0, x2: 0, y2: 1 });
add(pinFill, 'stop', { offset: 0, 'stop-color': '#3d93cd' });
add(pinFill, 'stop', { offset: 1, 'stop-color': '#1a6cbf' });
const soft = add(defs, 'filter', { id: 'soft', x: '-50%', y: '-50%', width: '200%', height: '200%' });
add(soft, 'feGaussianBlur', { stdDeviation: 2 });

add(map, 'rect', { width: 845, height: 675, fill: '#dddad8' });
add(map, 'rect', { width: 845, height: 675, fill: 'url(#streets)' });

function points(tile, text) {
  const n = text.split(' ').map(Number), out = [];
  for (let i = 0; i + 1 < n.length; i += 2) out.push([n[i] / 3 + tile.ox, n[i + 1] / 3 + tile.oy]);
  return out;
}
function smooth(p) {
  let d = 'M' + p[0];
  for (let i = 0; i < p.length - 1; i++) {
    const a = p[i - 1] || p[i], b = p[i], c = p[i + 1], e = p[i + 2] || c;
    const k = 7;
    d += 'C' + [b[0] + (c[0] - a[0]) / k, b[1] + (c[1] - a[1]) / k, c[0] - (e[0] - b[0]) / k, c[1] - (e[1] - b[1]) / k, c[0], c[1]].map(v => v.toFixed(1)).join(' ');
  }
  return d;
}
for (const kind of ['works', 'grass', 'park', 'wood', 'slate', 'pitch', 'water'])
  for (const t of tiles)
    for (const s of t[kind]) add(map, 'path', { class: 'area-' + kind, d: 'M' + points(t, s).join('L') + 'Z' });
for (const t of tiles)
  for (const [s, w] of t.river || []) add(map, 'path', { class: 'line river', 'stroke-width': w, d: smooth(points(t, s)) });
for (const t of tiles)
  for (const [s, w] of t.river || []) if (w > 8) add(map, 'path', { class: 'line ferry', d: smooth(points(t, s)) });
for (const [kind, classes] of [['canal', ['canal']], ['minor', ['minor']], ['rail', ['rail', 'rail-gap']],
  ['secondary', ['secondary-case', 'secondary']], ['primary', ['primary-case', 'primary']], ['trunk', ['trunk-case', 'trunk']]])
  for (const c of classes)
    for (const t of tiles)
      for (const s of t[kind]) add(map, 'path', { class: 'line ' + c, d: smooth(points(t, s)) });
for (const t of tiles) {
  for (const [x, y] of points(t, t.stations)) add(map, 'rect', { class: 'station', x: x - 2, y: y - 2, width: 4, height: 4 });
  for (const [x, y] of t.peaks ? points(t, t.peaks) : []) add(map, 'path', { class: 'peak', d: `M${x} ${y - 4}l4 7h-8z` });
}

const villages = [['North Cricklewood', 127, 24], ['Highgate', 348, 2], ['Archway', 397, 27], ['Dartmouth', 365, 52], ['Park', 365, 68],
  ['Cricklewood', 130, 74], ['West Hampstead', 209, 104], ['Gospel Oak', 341, 90], ['Kentish Town', 368, 109], ['Belsize Park', 285, 123],
  ["Queen's Park", 168, 180], ['Harlesden', 28, 184], ["St. John's Wood", 266, 207], ['Maida Vale', 212, 227], ['Maida Hill', 199, 246],
  ['Marylebone', 327, 250], ["King's Cross", 436, 219], ['North Kensington', 147, 269], ['Paddington', 249, 287], ['Mayfair', 355, 314],
  ['Covent Garden', 434, 310], ['Notting Hill', 161, 315], ['Finsbury Park', 477, 36], ['Stamford Hill', 611, 1], ['Leyton', 786, 6],
  ['Leyton', 842, -1], ['Stoke Newington', 567, 68], ['Clapton', 653, 64], ['Lower Holloway', 461, 86], ['Shacklewell', 607, 97],
  ['Homerton', 706, 107], ['Wanstead', 845, 95], ['Stratford New', 843, 115], ['Town', 845, 131], ['Canonbury', 540, 142],
  ['Hackney Wick', 753, 139], ['Haggerston', 593, 180], ['Hoxton', 555, 201], ['Bethnal Green', 653, 213], ['Bow', 747, 210],
  ['West Ham', 860, 191], ['Shoreditch', 575, 232], ['Mile End', 722, 240], ['Clerkenwell', 491, 248], ['Holborn', 464, 270],
  ['Stepney', 685, 282], ['Limehouse', 722, 302], ['Shadwell', 668, 323], ['Poplar', 789, 314], ['Blackwall', 816, 338],
  ["Earl's Court", 197, 415], ['Millbank', 414, 412], ['Pimlico', 379, 430], ['Chelsea', 284, 438], ['Walham Green', 198, 471],
  ['Barnes', 55, 520], ['Battersea', 273, 526], ['Clapham Junction', 287, 565], ['Roehampton', 47, 636], ['Southfields', 162, 663],
  ['Balham', 341, 663], ['Streatham', 436, 675], ['Southwark', 529, 361], ['Rotherhithe', 694, 371], ['Elephant and', 508, 391],
  ['Castle', 508, 407], ['Greenwich', 848, 376], ['Peninsula', 848, 392], ['Kennington', 479, 434], ['Old Kent Road', 586, 435],
  ['East', 840, 436], ['Oval', 462, 467], ['Camberwell', 534, 507], ['Loughborough', 501, 531], ['Junction', 501, 547],
  ['Peckham', 608, 512], ['New Cross', 689, 498], ['Gate', 689, 514], ['Deptford', 766, 500], ['Blackheath', 866, 550],
  ['East Dulwich', 591, 591], ['Brockley', 719, 595], ['Dulwich Village', 560, 636], ['Honor Oak', 706, 636], ['Hither Green', 820, 635],
  ['Catford', 774, 659], ['Dulwich', 560, 675]];
const towns = [['Hampstead', 253, 75], ['Willesden', 64, 127], ['Kilburn', 188, 152], ['Camden Town', 380, 150], ["Shepherd's", 106, 334],
  ['Bush', 106, 355], ['Hackney', 675, 145], ['Stratford', 847, 159], ['Islington', 509, 171], ['City of London', 536, 291],
  ['Kensington', 185, 378], ['City of Westminster', 387, 387], ['Hammersmith', 104, 414], ['Fulham', 162, 507], ['Putney', 127, 570],
  ['Clapham', 382, 571], ['Wandsworth', 204, 599], ['Greenwich', 823, 467], ['Lewisham', 804, 570], ['Brixton', 454, 600]];
function place(list, size) {
  for (const [name, x, y] of list) add(map, 'text', { class: 'middle place ' + size, x, y: y + 4 }, name);
}
place([['Hampstead', 289, 28], ['Heath', 289, 41]], 'nature');
place(villages, '');
place(towns, 'town');
place([['London', 418, 334]], 'capital');

add(map, 'circle', { class: 'range', cx: 423, cy: 338, r: 474 });
add(map, 'circle', { class: 'center', cx: 422, cy: 337, r: 3 });

const pins = [[431, 78], [190, 121], [315, 127], [411, 139], [362, 146], [353, 168], [557, 210], [279, 236], [575, 247], [127, 334],
  [499, 528], [473, 545], [739, 557], [292, 575], [128, 684]];
for (const [x, y] of pins)
  add(map, 'path', { d: `M${x} ${y}l6-14 12-14c5-4 10 2 6 8l-9 10z`, fill: '#000', opacity: .22, filter: 'url(#soft)' });
for (const [x, y] of pins) {
  const g = add(map, 'g', { transform: `translate(${x} ${y})` });
  add(g, 'path', { d: 'M0 0C-3-9-13-20-13-30.500A13 13 0 0 1 13-30.500C13-20 3-9 0 0z', fill: 'url(#pin)', stroke: '#2b76ae', 'stroke-width': 1 });
  add(g, 'circle', { cx: 0, cy: -30, r: 5, fill: '#fff', stroke: '#3079b3', 'stroke-width': .8 });
}
```
